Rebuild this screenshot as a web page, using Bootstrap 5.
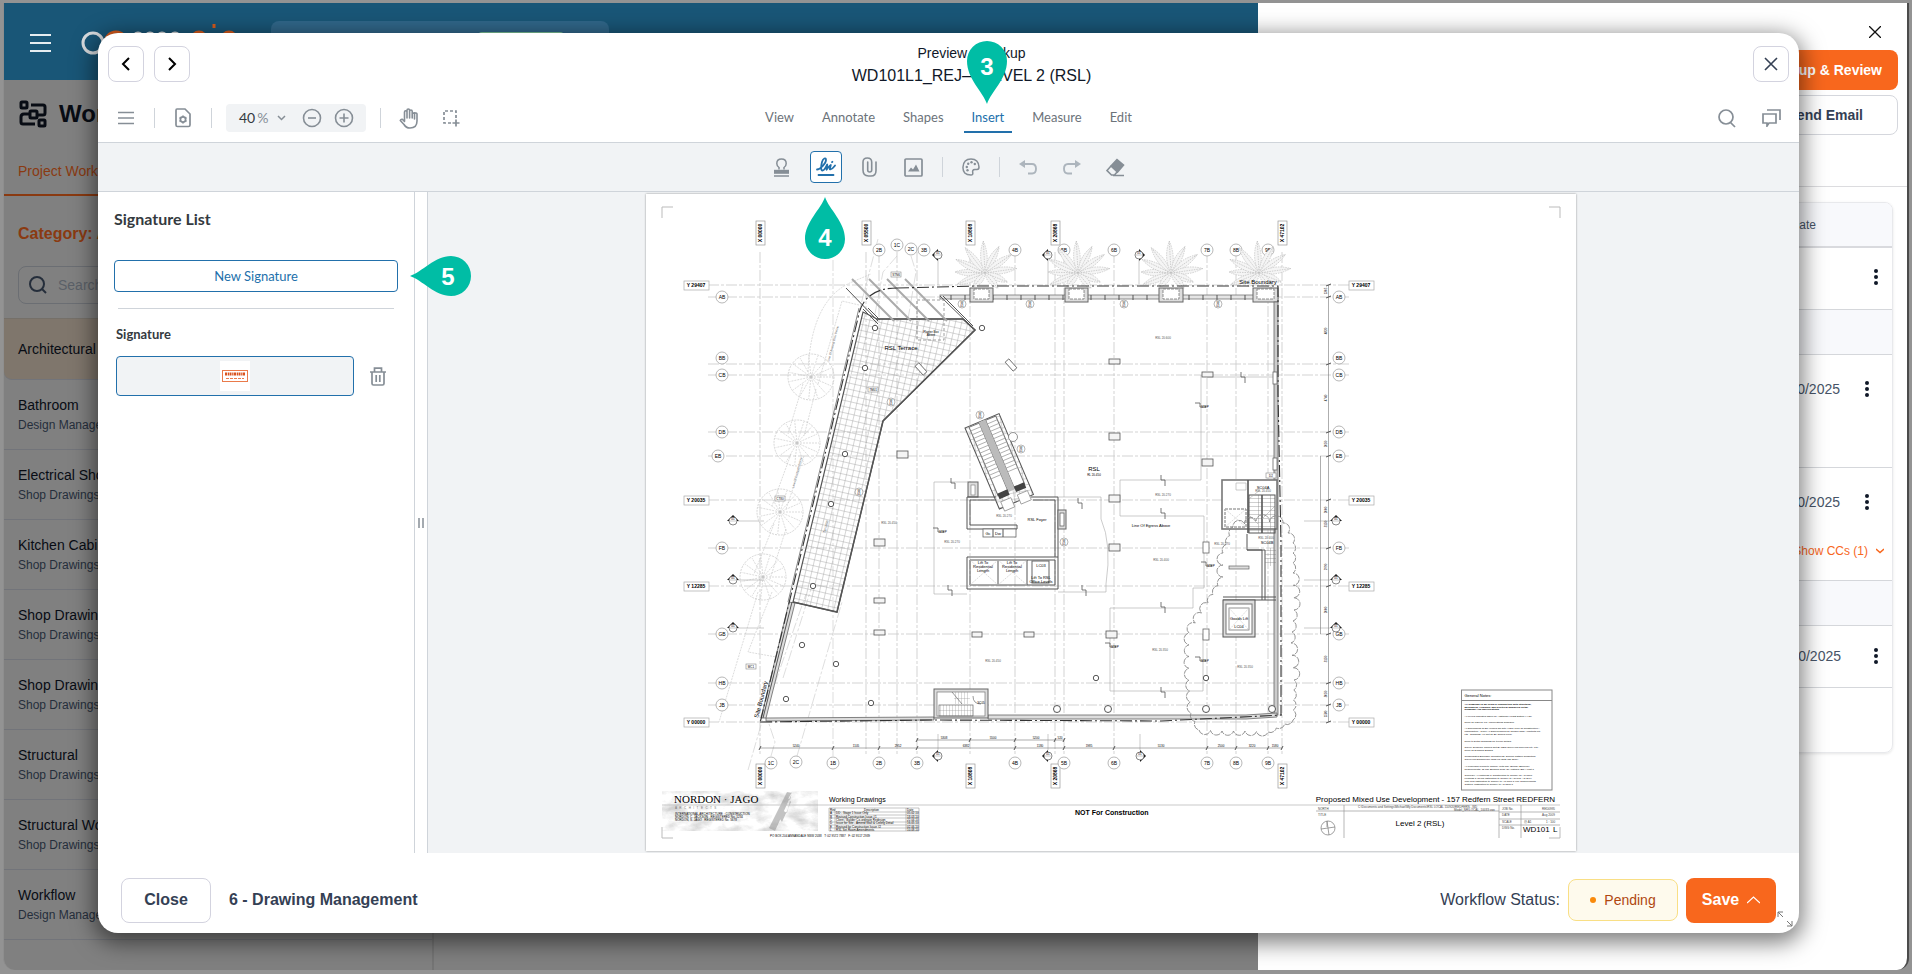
<!DOCTYPE html>
<html lang="en">
<head>
<meta charset="utf-8">
<meta name="viewport" content="width=device-width, initial-scale=1">
<title>Preview / Markup</title>
<link href="https://cdn.jsdelivr.net/npm/bootstrap@5.3.0/dist/css/bootstrap.min.css" rel="stylesheet">
<style>
  :root { --orange:#f8671d; --blue:#2270ab; --icon:#868e96; --rule:#cfd4da; --slate:#344054; }
  body { font-family:"Liberation Sans", Arial, sans-serif; font-size:14px; line-height:20px; background:#939393; color:#101828; }
  svg { display:block; flex:none; }
  .frame { height:100vh; min-height:640px; padding:3px 3px 4px; }
  .app { border-radius:0 0 12px 12px; background:#808080; border-left:1px solid #8e8e8e; }
  .app-head { height:77px; background:#195677; padding-left:26px; }
  .app-burger { margin-top:30px; }
  .app-logo { margin:16px 0 0 30px; }
  .app-find { width:338px; height:40px; border-radius:8px; background:#30678a; margin:18px 0 0 28px; padding-left:207px; }
  .app-find i { display:block; width:86px; height:22px; margin-top:11px; border-radius:4px; background:#7fc49a; }
  .categories { width:430px; border-right:2px solid #757575; }
  .cat-title { font-size:24px; line-height:32px; font-weight:700; color:#080c14; padding:18px 15px 0; }
  .cat-tab { color:#8a3a11; border-bottom:2px solid #8a3a11; padding:31px 14px 12px; height:66px; line-height:20px; }
  .cat-name { color:#8a3a11; font-weight:700; font-size:16px; padding:28px 14px 22px; }
  .cat-search { margin:0 14px 14px; height:38px; border:1px solid #6b6e73; border-radius:8px; padding:0 9px; }
  .cat-search input { background:transparent; border:0; outline:0; width:200px; color:#5b6068; }
  .cat-search input::placeholder { color:#5b6068; }
  .cat-row { height:70px; padding:0 14px; border-bottom:1px solid #72747a; color:#080c14; text-decoration:none; }
  .cat-row small { font-size:12px; color:#252e3b; line-height:20px; }
  .cat-row.current { height:62px; background:#7f766c; border-radius:0 0 0 8px; border-top:1px solid #757069; }

  .drawer { position:absolute; top:3px; right:3px; bottom:4px; width:651px; background:#fff; border-right:2px solid #4b4b4b; border-radius:0 0 12px 0; }
  .drawer-top { height:184px; border-bottom:1px solid #dcdcdf; padding:23px 9px 0; gap:5px; }
  .drawer-x { margin:0 17px 7px; }
  .icon-btn { border:0; background:none; padding:0; display:flex; align-items:center; justify-content:center; }
  .act { width:180px; height:40px; border-radius:8px; font-size:14px; font-weight:700; }
  .act-main { background:var(--orange); color:#fff; border:0; text-align:right; padding-right:16px; }
  .act-mail { background:#fff; color:var(--slate); border:1px solid #d5d7dd; text-align:right; padding-right:34px; }
  .grid-box { margin:15px 14px 0 20px; border:1px solid #e8e9ec; border-radius:8px; box-shadow:0 1px 3px #0000001a; overflow:hidden; }
  .grid-box table { width:100%; border-collapse:collapse; color:#475467; }
  .grid-box th { height:44px; background:#f8f9fc; font-size:12px; font-weight:400; border-bottom:2px solid #d9dade; text-align:right; padding-right:76px; }
  .grid-box td { padding:0 8px; border-bottom:1px solid #d5d7db; vertical-align:top; }
  .date-line { padding-top:24px; padding-right:14px; gap:24px; }
  .date-line.outer { padding-top:20px; padding-right:5px; gap:32px; }
  .ccs { color:var(--orange); font-size:12px; padding-top:29px; }
  .band td { background:#f8f9fc; height:45px; }
  .end-row td { border-bottom:0; height:65px; }

  .markup { position:absolute; inset:33px 113px 41px 98px; background:#fff; border-radius:20px; box-shadow:0 6px 22px 4px #00000080; display:flex; flex-direction:column; }
  .markup-head { height:57px; padding:0 10px; gap:10px; }
  .sq { width:36px; height:36px; border:1px solid #d3d3df; border-radius:8px; background:#fff; margin-top:13px; }
  .markup-title { padding-top:10px; font-size:14px; }
  .markup-title h1 { font-size:16px; line-height:26px; margin:0; font-weight:400; }
  .lato { font-family:Lato, "Liberation Sans", sans-serif; }
  .bar-a { height:53px; padding:4px 12px 0; border-bottom:1px solid var(--rule); }
  .bar-a-side { flex:1 1 0; gap:12px; }
  .bar-b { height:49px; background:#f1f3f5; border-bottom:1px solid var(--rule); gap:12px; }
  .tool { width:32px; height:32px; border:1px solid transparent; border-radius:4px; background:none; padding:0; color:var(--icon); display:flex; align-items:center; justify-content:center; position:relative; }
  .tool.on { border-color:var(--blue); background:#fff; color:var(--blue); }
  .tool.dim { color:#adb5bd; }
  .sep { width:1px; height:20px; background:var(--rule); }
  .zoomer { height:28px; width:140px; background:#f1f3f5; border-radius:4px; padding-left:13px; color:#343a40; font-size:14px; margin:0 2px; }
  .zoomer .tool { height:28px; }
  .zoom-pct { width:37px; gap:2px; }
  .zoom-pct span { color:#868e96; }
  .tabs { gap:12px; }
  .tabs a { position:relative; color:#6c737a; text-decoration:none; font-size:13px; line-height:28px; padding:0 8px; border-bottom:2px solid transparent; }
  .tabs a.on { color:var(--blue); border-color:var(--blue); }
  .callout { position:absolute; z-index:3; pointer-events:none; }
  .callout text { font:700 24px "Liberation Sans", Arial, sans-serif; fill:#fff; text-anchor:middle; }
  .over-tab { left:3px; bottom:27px; }
  .under-tool { left:-6px; top:45px; }
  .beside-btn { left:calc(100% + 12px); top:-4px; }
  .work { min-height:0; }
  .signatures { width:316px; padding:15px 16px 0; color:#343a40; }
  .signatures h2 { font-size:16px; line-height:24px; margin:0 0 29px; font-weight:700; }
  .signatures h3 { font-size:13px; line-height:20px; margin:0 0 12px; font-weight:700; }
  .new-sig { width:100%; height:32px; border:1px solid var(--blue); border-radius:4px; background:#fff; color:var(--blue); font-size:13px; }
  .signatures hr { margin:16px 4px 15px; border-color:var(--rule); opacity:1; }
  .sig-item { padding-left:2px; }
  .sig-pick { width:238px; height:40px; border:1px solid var(--blue); border-radius:4px; background:#f1f3f5; padding:0; display:flex; align-items:center; justify-content:center; }
  .grip { width:14px; border:solid var(--rule); border-width:0 1px; }
  .viewer { background:#f1f3f5; min-width:0; padding:2px 6px 0 0; overflow:hidden; }
  .sheet { width:930px; max-width:100%; background:#fff; box-shadow:0 0 2px #00000066; }
  .markup-foot { height:80px; padding:14px 23px 0; font-size:16px; color:var(--slate); position:relative; }
  .foot-btn { height:45px; border-radius:8px; font-weight:700; font-size:16px; }
  .close-btn { width:90px; border:1px solid #d3d3df; background:#fff; color:var(--slate); margin-right:18px; }
  .save-btn { width:90px; border:0; background:var(--orange); color:#fff; }
  .pending { width:110px; height:42px; border:1px solid #f9df85; border-radius:8px; background:#fefaed; color:#b0470f; font-size:14px; }
  .pending i { width:6px; height:6px; border-radius:50%; background:#f98a0b; }
  .resize { position:absolute; right:6px; bottom:6px; }

  /* drawing sheet */
  .sheet text { font-family:"Liberation Sans", Arial, sans-serif; }
  .s3 { font-size:3px; } .s4 { font-size:4px; } .s5 { font-size:5px; } .s6 { font-size:6px; } .s7 { font-size:7px; } .s8 { font-size:8px; }
  .mid { text-anchor:middle; }
  .axis { stroke:#c8c8c8; stroke-dasharray:11 2 3 2; fill:none; }
  .thin { stroke:#aaa; fill:none; stroke-width:.6; }
  .wall { stroke:#666; fill:#ddd; stroke-width:.8; }
  .edge { stroke:#555; fill:none; }
  .site { stroke:#333; fill:none; stroke-width:1.1; stroke-dasharray:12 3 2 3; }
  .faint { stroke:#c4c4c4; fill:none; stroke-width:.6; stroke-dasharray:2 1; }
</style>
</head>
<body>
<div class="frame">
  <div class="app h-100 d-flex flex-column overflow-hidden">
    <header class="app-head d-flex flex-shrink-0">
      <button class="icon-btn app-burger align-self-start" aria-label="Main menu"><svg width="21" height="20" stroke="#e6edf1" stroke-width="2"><path d="M0 2h21M0 10h21M0 18h21"/></svg></button>
      <svg class="app-logo" width="162" height="50" fill="none" stroke-width="3">
        <circle cx="12" cy="24" r="10" stroke="#d9dcdf"/>
        <circle cx="35" cy="24" r="11" stroke="#d85b1c"/>
        <g stroke="#d9dcdf"><circle cx="57" cy="19" r="5"/><circle cx="69" cy="19" r="5"/><circle cx="81" cy="19" r="5"/><circle cx="94" cy="19" r="5"/></g>
        <g stroke="#d85b1c"><circle cx="118" cy="20" r="7"/><path d="M133 5v4M133 14v12"/><circle cx="148" cy="20" r="7"/></g>
      </svg>
      <div class="app-find"><i></i></div>
    </header>
    <div class="categories flex-grow-1">
      <div class="cat-title d-flex align-items-center gap-2">
        <svg width="28" height="28" fill="none" stroke="#080c14" stroke-width="3"><rect x="2" y="2" width="6" height="6" rx="1"/><rect x="11" y="11" width="7" height="7" rx="1"/><rect x="20" y="20" width="6" height="6" rx="1"/><path d="M12 5h12q2 0 2 2v6q0 2-2 2h-5M11 14H5q-3 0-3 3v5q0 2 2 2h12"/></svg>
        <span class="ms-1">Workflows</span>
      </div>
      <div class="cat-tab">Project Workflows</div>
      <div class="cat-name">Category: All</div>
      <label class="cat-search d-flex align-items-center gap-2">
        <svg width="20" height="20" fill="none" stroke="#252e3b" stroke-width="2"><circle cx="9" cy="9" r="7"/><path d="M14 14l4 4"/></svg>
        <input type="search" placeholder="Search" aria-label="Search categories">
      </label>
      <nav class="d-flex flex-column">
        <a href="#" class="cat-row current d-flex flex-column justify-content-center">Architectural</a>
        <a href="#" class="cat-row d-flex flex-column justify-content-center">Bathroom<small>Design Management</small></a>
        <a href="#" class="cat-row d-flex flex-column justify-content-center">Electrical Shop Drawings<small>Shop Drawings</small></a>
        <a href="#" class="cat-row d-flex flex-column justify-content-center">Kitchen Cabinets<small>Shop Drawings</small></a>
        <a href="#" class="cat-row d-flex flex-column justify-content-center">Shop Drawings<small>Shop Drawings</small></a>
        <a href="#" class="cat-row d-flex flex-column justify-content-center">Shop Drawings<small>Shop Drawings</small></a>
        <a href="#" class="cat-row d-flex flex-column justify-content-center">Structural<small>Shop Drawings</small></a>
        <a href="#" class="cat-row d-flex flex-column justify-content-center">Structural Workflow<small>Shop Drawings</small></a>
        <a href="#" class="cat-row d-flex flex-column justify-content-center">Workflow<small>Design Management</small></a>
      </nav>
    </div>
  </div>
</div>

<aside class="drawer">
  <div class="drawer-top d-flex flex-column align-items-end">
    <button class="icon-btn drawer-x" aria-label="Close panel"><svg width="12" height="12" stroke="#111" stroke-width="1.3"><path d="M0 0l12 12M12 0L0 12"/></svg></button>
    <button class="act act-main">Markup &amp; Review</button>
    <button class="act act-mail">Send Email</button>
  </div>
  <div class="grid-box">
    <table>
      <thead><tr><th>Due Date</th></tr></thead>
      <tbody id="reviews"></tbody>
    </table>
  </div>
</aside>

<main class="markup">
  <div class="markup-head d-flex align-items-start">
    <button class="sq icon-btn" aria-label="Previous"><svg width="10" height="14" fill="none" stroke="#000" stroke-width="2"><path d="M8 1L2 7l6 6"/></svg></button>
    <button class="sq icon-btn" aria-label="Next"><svg width="10" height="14" fill="none" stroke="#000" stroke-width="2"><path d="M2 1l6 6-6 6"/></svg></button>
    <div class="markup-title flex-grow-1 text-center"><div>Preview / Markup</div><h1>WD101L1_REJ— LEVEL 2 (RSL)</h1></div>
    <button class="sq icon-btn" aria-label="Close preview"><svg width="14" height="14" stroke="#344054" stroke-width="1.6"><path d="M1 1l12 12M13 1L1 13"/></svg></button>
  </div>

  <div class="bar-a lato d-flex align-items-center">
    <div class="bar-a-side d-flex align-items-center">
      <button class="tool" aria-label="Menu"><svg width="16" height="14" stroke="currentColor" stroke-width="1.6"><path d="M0 1.5h16M0 7h16M0 12.5h16"/></svg></button>
      <span class="sep"></span>
      <button class="tool" aria-label="Page settings"><svg width="16" height="20" fill="none" stroke="currentColor" stroke-width="1.7"><path d="M2 1h8l5 5v11q0 1.5-1.5 1.5h-11Q1 18.500 1 17V2.500Q1 1 2 1z"/><circle cx="8" cy="11.5" r="2.6"/><path d="M8 7.500v1.300M8 14.200v1.300M4.500 9.500l1.200.7M10.300 12.800l1.200.7M4.500 13.500l1.200-.7M10.300 10.200l1.200-.7"/></svg></button>
      <span class="sep"></span>
      <div class="zoomer d-flex align-items-center">
        <div class="zoom-pct d-flex">40<span>%</span></div>
        <svg width="10" height="6" fill="none" stroke="#868e96" stroke-width="1.5"><path d="M2 1l3.500 3.500L9 1"/></svg>
        <button class="tool ms-2 me-0 ps-1" aria-label="Zoom out"><svg width="20" height="20" fill="none" stroke="currentColor" stroke-width="1.6"><circle cx="10" cy="10" r="8.5"/><path d="M6 10h8"/></svg></button>
        <button class="tool ps-1" aria-label="Zoom in"><svg width="20" height="20" fill="none" stroke="currentColor" stroke-width="1.6"><circle cx="10" cy="10" r="8.5"/><path d="M5.500 10h9M10 5.500v9"/></svg></button>
      </div>
      <span class="sep"></span>
      <div class="d-flex" style="gap:10px">
      <button class="tool" aria-label="Pan"><svg width="20" height="21" fill="none" stroke="currentColor" stroke-width="1.6" stroke-linecap="round" stroke-linejoin="round"><path d="M5.500 13V4q0-1.300 1.200-1.300T8 4v6V2.300Q8 1 9.300 1t1.300 1.300V10 3.300Q10.600 2 11.900 2t1.300 1.300V10 6q0-1.200 2.400-1.200T18 6v7q0 7-7 7-4 0-6-3.500L1.300 12.500q.5-1.500 2-1.200L5.500 13.500M15.500 5v6"/></svg></button>
      <button class="tool" aria-label="Select area"><svg width="18" height="18" fill="none" stroke="currentColor" stroke-width="1.7"><path d="M9 14H2V2h12v7" stroke-dasharray="3 2"/><path d="M14 10.500v7M10.500 14H17.500"/></svg></button>
      </div>
    </div>
    <nav class="tabs d-flex">
      <a href="#">View</a><a href="#">Annotate</a><a href="#">Shapes</a>
      <a href="#" class="on">Insert
        <svg class="callout over-tab" width="40" height="63" viewBox="0 0 40 63"><path d="M20 63C16 51 0 38 0 20a20 20 0 0 1 40 0c0 18-16 31-20 43z" fill="#00bda5"/><text x="20" y="34">3</text></svg></a>
      <a href="#">Measure</a><a href="#">Edit</a>
    </nav>
    <div class="bar-a-side d-flex justify-content-end">
      <button class="tool" aria-label="Search"><svg width="18" height="19" fill="none" stroke="currentColor" stroke-width="1.7"><circle cx="8" cy="8" r="7"/><path d="M12.500 13.500l4.500 4.500"/></svg></button>
      <button class="tool" aria-label="Comments"><svg width="19" height="18" fill="none" stroke="currentColor" stroke-width="1.7"><path d="M1 5h13v9H7l-2 3v-3H1zM5 1h13v10"/></svg></button>
    </div>
  </div>

  <div class="bar-b d-flex align-items-center justify-content-center">
    <button class="tool" aria-label="Stamp"><svg width="17" height="19" fill="none" stroke="currentColor" stroke-width="1.5"><path d="M6 11.500V9.500Q3.800 8 3.800 5.500 3.800 1 8.500 1t4.700 4.500q0 2.500-2.200 4v2"/><path d="M1 13.800h15" stroke-width="4"/><path d="M1 18h15"/></svg></button>
    <button class="tool on" aria-label="Signature"><svg width="20" height="20" fill="none" stroke="currentColor" stroke-width="1.8" stroke-linecap="round" stroke-linejoin="round"><path d="M1 12.500C4 12.500 10 6.500 10 3c0-3-3-1.500-4 2-1 4-1.500 8.500.5 8.500S10 9.500 11.200 7.500L10.600 12.800C12 11 13 9 14.800 8L13.800 12.200C15.500 13.500 17 11 19 8.500M16 5.200l.4-.4M2.500 18h15"/></svg>
      <svg class="callout under-tool" width="40" height="62" viewBox="0 0 40 62"><path d="M20 0C24 12 40 25 40 42a20 20 0 0 1-40 0C0 25 16 12 20 0z" fill="#00bda5"/><text x="20" y="49">4</text></svg></button>
    <button class="tool" aria-label="Attach file"><svg width="15" height="20" fill="none" stroke="currentColor" stroke-width="1.6" stroke-linecap="round"><path d="M14 5v8.500q0 5.500-5 5.500H6.500Q1 19 1 13V5q0-4 4.300-4T9.700 5v8q0 2-2 2t-2-2V5M11.500 5"/></svg></button>
    <button class="tool" aria-label="Insert image"><svg width="19" height="19" fill="none" stroke="currentColor" stroke-width="1.7"><rect x="1" y="1" width="17" height="17" rx="1"/><path d="M4 13.500l3-4 2 2 3-5 3.500 7z" fill="currentColor" stroke="none"/></svg></button>
    <span class="sep"></span>
    <button class="tool" aria-label="Style"><svg width="18" height="18" fill="none" stroke="currentColor" stroke-width="1.5"><path d="M9 17q2 0 1.800-2-.8-3.500 2-3.500H15q2 0 2-2.500Q16.500 1 9 1T1 9t8 8z"/><g fill="currentColor" stroke="none"><circle cx="4.8" cy="9" r="1.2"/><circle cx="6.2" cy="5.7" r="1.2"/><circle cx="9.5" cy="4.3" r="1.2"/><circle cx="12.8" cy="6" r="1.2"/><circle cx="5.5" cy="12.3" r="1.2"/></g></svg></button>
    <span class="sep"></span>
    <button class="tool dim" aria-label="Undo"><svg width="18" height="15" fill="none" stroke="currentColor" stroke-width="1.9"><path d="M4 4h9q4 0 4 4.800T13 13.500H9"/><path d="M0 4l6-4v8z" fill="currentColor" stroke="none"/></svg></button>
    <button class="tool dim" aria-label="Redo"><svg width="18" height="15" fill="none" stroke="currentColor" stroke-width="1.9"><path d="M14 4H5Q1 4 1 8.800t4 4.700h4"/><path d="M18 4l-6-4v8z" fill="currentColor" stroke="none"/></svg></button>
    <button class="tool" aria-label="Eraser"><svg width="19" height="19" fill="none" stroke="currentColor" stroke-width="1.6"><path d="M11 1.500l6.500 5.500-6 7-6.500-6z" fill="currentColor"/><path d="M5 8l-4 4.500 4.500 4.500h3l3-3.500M7 17.500h11"/></svg></button>
  </div>

  <div class="work d-flex flex-grow-1">
    <section class="signatures lato flex-shrink-0">
      <h2>Signature List</h2>
      <div class="position-relative">
        <button class="new-sig">New Signature</button>
        <svg class="callout beside-btn" width="61" height="40" viewBox="0 0 61 40"><path d="M0 20C12 16 25 0 41 0a20 20 0 0 1 0 40C25 40 12 24 0 20z" fill="#00bda5"/><text x="38" y="29">5</text></svg>
      </div>
      <hr>
      <div class="sig-item">
        <h3>Signature</h3>
        <div class="d-flex align-items-center gap-2">
          <button class="sig-pick" aria-label="Saved signature"><svg width="30" height="30"><path fill="#fff" d="M0 0h30v30H0z"/><rect x="2.5" y="9.5" width="25" height="11" fill="none" stroke="#ea7a4a"/><path d="M5 13h20" stroke="#d9531e" stroke-width="3" stroke-dasharray="2 .7 1.3 .5"/><path d="M6 17.500h18" stroke="#ea7a4a" stroke-dasharray="3 1"/></svg></button>
          <button class="tool" aria-label="Delete signature"><svg width="16" height="19" fill="none" stroke="currentColor" stroke-width="1.7"><path d="M0 5h16M4.500 5V1.200h7V5M2 5v11.500q0 1.500 1.500 1.500h9q1.500 0 1.500-1.500V5M6.200 8v7M9.800 8v7"/></svg></button>
        </div>
      </div>
    </section>
    <div class="grip d-flex align-items-center justify-content-center flex-shrink-0"><svg width="6" height="10" stroke="#868e96" stroke-width="1.5"><path d="M1 0v10M5 0v10"/></svg></div>
    <section class="viewer flex-grow-1 d-flex justify-content-center align-items-start">
      <svg class="sheet" id="sheet" viewBox="0 0 930 657" role="img" aria-label="Level 2 floor plan">
        <defs>
          <pattern id="tile" width="6" height="6" patternUnits="userSpaceOnUse" patternTransform="rotate(13)"><path d="M0 0h6M0 0v6" stroke="#999" stroke-width=".8"/></pattern>
          <pattern id="step" width="3" height="12" patternUnits="userSpaceOnUse"><path d="M0 0v12M0 0h3" stroke="#888" stroke-width=".6"/></pattern>
          <pattern id="stepv" width="12" height="4" patternUnits="userSpaceOnUse"><path d="M0 0h12M0 0v4" stroke="#777" stroke-width=".7"/></pattern>
          <filter id="brush" x="0" y="0" width="1" height="1"><feTurbulence type="fractalNoise" baseFrequency=".05 .09" numOctaves="5" seed="8"/><feColorMatrix values="0 0 0 0 .4  0 0 0 0 .4  0 0 0 0 .4  2.2 0 0 0 -.9"/></filter>
        </defs>
        <g id="plan"></g>
        <path d="M16 24V13h11M903 13h11v11M16 633v11h11" fill="none" stroke="#bbb"/>
        <!-- title block -->
        <rect x="16" y="597" width="156" height="40" filter="url(#brush)" opacity=".55"/>
        <path d="M123 634l18-36 5 1-17 38zM146 598l-10 18 5 3zM132 622l10-18 3 4-9 20z" fill="#888" opacity=".5"/>
        <path d="M16 611H914" stroke="#bbb" stroke-width=".8"/>
        <text x="28" y="609" style="font:11px 'Liberation Serif',serif">NORDON · JAGO</text>
        <text x="29" y="615" class="s3" fill="#777">A &#160; R &#160; C &#160; H &#160; I &#160; T &#160; E &#160; C &#160; T &#160; S</text>
        <text x="29" y="621" class="s3">INTERNATIONAL ARCHITECTURE · CONSTRUCTION</text>
        <text x="29" y="624" class="s3">NORDON, C. JACKSON &#160; REGISTERED No. 1234</text>
        <text x="29" y="627" class="s3">NORDON, S. JAGO &#160; REGISTERED No. 5678</text>
        <text x="124" y="643" class="s3">PO BOX 204 ANNANDALE NSW 2038 &#160; T: 02 9572 7887 &#160; F: 02 9517 2939</text>
        <text x="183" y="608" class="s7">Working Drawings</text>
        <path d="M183 614h90v23h-90zM189 614v23M260 614v23M183 618h90M183 621h90M183 624h90M183 628h90M183 631h90M183 634h90" fill="none" stroke="#888" stroke-width=".5"/>
        <g class="s3" id="revs"></g>
        <text x="429" y="621" class="s7" font-weight="700">NOT For Construction</text>
        <text x="909" y="608" class="s8" text-anchor="end">Proposed Mixed Use Development - 157 Redfern Street REDFERN</text>
        <text x="774" y="632" class="s8 mid">Level 2 (RSL)</text>
        <text x="877" y="638" class="s8">WD101</text><text x="907" y="638" class="s8">L</text>
        <path d="M698 611v33M853 611v33M875 611v33M853 618h61M853 625h61M853 631h61M670 617h183" fill="none" stroke="#999" stroke-width=".7"/>
        <path d="M903 644h11v-11" fill="none" stroke="#bbb"/>
        <g class="s3" fill="#444"><text x="672" y="616">NORTH</text><text x="672" y="622">TITLE</text><text x="712" y="614">C:\Documents and Settings\Michael\My Documents\RSL LOCAL 110920\REDFERN - WD</text><text x="808" y="617">Model_NR\LOCAL_10033.vwx</text><text x="856" y="616">JOB No.</text><text x="896" y="616">RED0995</text><text x="856" y="622">DATE</text><text x="896" y="622">Aug 2009</text><text x="856" y="629">SCALE</text><text x="878" y="629">@ A1</text><text x="900" y="629">1 : 100</text><text x="856" y="635">DWG No.</text></g>
        <g fill="none" stroke="#888" stroke-width=".8"><circle cx="682" cy="634" r="7"/><path d="M675 635l14-2M681 627l2 14M681 627v6"/></g>
        <svg x="815" y="495" width="92" height="102" viewBox="0 0 184 204"><g id="notes"><rect x="1" y="2" width="181" height="200" fill="#fff" stroke="#888" stroke-width="2"/><path d="M1 23h181" stroke="#888" stroke-width="2"/><text x="7" y="16" style="font-size:8px">General Notes:</text></g></svg>
      </svg>
    </section>
  </div>

  <footer class="markup-foot d-flex align-items-center">
    <button class="foot-btn close-btn">Close</button>
    <strong>6 - Drawing Management</strong>
    <span class="ms-auto me-2">Workflow Status:</span>
    <span class="pending d-flex align-items-center justify-content-center gap-2 me-2"><i></i>Pending</span>
    <button class="foot-btn save-btn d-flex align-items-center justify-content-center gap-2">Save <svg width="13" height="8" fill="none" stroke="#fff" stroke-width="1.2"><path d="M0 7l6.500-6L13 7"/></svg></button>
    <svg class="resize" width="16" height="16" fill="none" stroke="#777" stroke-width="1"><path d="M1 6V1h5M1 1l5 5M15 10v5h-5M15 15l-5-5"/></svg>
  </footer>
</main>

<script src="https://cdn.jsdelivr.net/npm/bootstrap@5.3.0/dist/js/bootstrap.bundle.min.js"></script>
<script>
// review rows in the side drawer
const dots = '<button class="icon-btn" aria-label="Row actions"><svg width="6" height="18" fill="#101828"><circle cx="3" cy="3" r="2"/><circle cx="3" cy="9" r="2"/><circle cx="3" cy="15" r="2"/></svg></button>';
const line = (date, kind = '') => `<div class="date-line ${kind} d-flex justify-content-end align-items-center">${date}${dots}</div>`;
const cell = (h, inner) => `<tr><td style="height:${h}px">${inner}</td></tr>`;
const band = '<tr class="band"><td></td></tr>';
document.getElementById('reviews').innerHTML =
  cell(62, line('', 'outer')) + band +
  cell(113, line('10/10/2025')) +
  cell(113, line('10/10/2025') + '<a href="#" class="ccs d-flex justify-content-end align-items-center gap-2 text-decoration-none">Show CCs (1)<svg width="8" height="6" fill="none" stroke="#f8671d" stroke-width="1.5"><path d="M0 1l4 3.500L8 1"/></svg></a>') +
  band + cell(62, line('10/10/2025', 'outer')) + '<tr class="end-row"><td></td></tr>';

// floor plan
let s = '';
const P = (d, c, x = '') => s += `<path d="${d}" class="${c}" ${x}/>`;
const T = (x, y, t, c = 's5 mid', e = '') => s += `<text x="${x}" y="${y}" class="${c}" ${e}>${t}</text>`;
const C = (x, y, r, e = 'fill="#fff" stroke="#777" stroke-width=".8"') => s += `<circle cx="${x}" cy="${y}" r="${r}" ${e}/>`;
const R = (x, y, w, h, e = 'fill="#fff" stroke="#666" stroke-width=".8"') => s += `<rect x="${x}" y="${y}" width="${w}" height="${h}" ${e}/>`;
const bubble = (x, y, t) => { C(x, y, 6, 'fill="#fff" stroke="#999" stroke-width=".7"'); T(x, y + 2, t); };

// street trees
for (const [x, y] of [[165,183],[151,249],[134,318],[117,383]]) {
  C(x, y, 23, 'fill="none" stroke="#c4c4c4" stroke-width=".7" stroke-dasharray="2 1"');
  for (let a = 0; a < 360; a += 24) P(`M${x} ${y}L${(x + 22 * Math.cos(a * .01745)).toFixed(1)} ${(y + 22 * Math.sin(a * .01745)).toFixed(1)}`, 'faint');
}
P('M162 178Q165 105 206 88L225 80M172 190L196 107 213 111M157 190L142 240M170 195L158 242M145 260L126 312M158 262L140 315M128 330L108 380M140 335L124 385M112 398L73 528M126 398L102 458 136 464', 'faint');
// axes
for (const x of [114,220,233,251,271,324,369,409,418,468,561,590,622,636]) P(`M${x} 58V562`, 'axis', 'stroke-width=".8"');
P('M187 66V562M232 45L213 118M251 62L237 78 228 125M265 62L270 78 262 125M125 562L129 548 123 530M151 562L196 408M102 576L117 524 160 400M137 484L165 395', 'axis', 'stroke-width=".6"');
for (const y of [91,103,170,181,238,262,306,354,392,440,489,511,528]) P(`M62 ${y}H703`, 'axis', 'stroke-width=".8"');
[114,220,324,409,636].forEach((x, i) => { const t = ['X 00000','X 05500','X 10808','X 20868','X 47102'][i];
  for (const y of x === 220 ? [27] : [27, 570]) { R(x - 4, y, 9, 24, 'fill="#fff" stroke="#999" stroke-width=".7"'); T(0, 0, t, 's5 mid', `font-weight="700" transform="translate(${x + 2} ${y + 12}) rotate(-90)"`); } });
[[91,'Y 29407'],[306,'Y 20035'],[392,'Y 12285'],[528,'Y 00000']].forEach(([y, t]) => { for (const x of [38, 703]) { R(x, y - 4, 25, 9, 'fill="#fff" stroke="#aaa" stroke-width=".7"'); T(x + 12, y + 2, t, 's5 mid', 'font-weight="700"'); } });
[[233,56,'2B'],[251,51,'1C'],[265,55,'2C'],[278,56,'3B'],[369,56,'4B'],[418,56,'5B'],[468,56,'6B'],[561,56,'7B'],[590,56,'8B'],[622,56,'9B'],[125,569,'1C'],[150,568,'2C'],[187,569,'1B'],[233,569,'2B'],[271,569,'3B'],[369,569,'4B'],[418,569,'5B'],[468,569,'6B'],[561,569,'7B'],[590,569,'8B'],[622,569,'9B']].forEach(b => bubble(...b));
[[103,'AB'],[164,'BB'],[181,'CB'],[238,'DB'],[262,'EB'],[354,'FB'],[440,'GB'],[489,'HB'],[511,'JB']].forEach(([y, t]) => { bubble(t === 'EB' ? 72 : 76, y, t); bubble(693, y, t); });
const mark = (x, y, r) => { s += `<g transform="translate(${x} ${y}) rotate(${r})"><path d="M-6 0L0-6 6 0z" fill="#111"/></g>`; C(x, y, 4, 'fill="#fff" stroke="#555" stroke-width=".7"'); P(`M${x - 4} ${y}h8`, 'thin'); T(x, y - 1, '01', 's3 mid'); };
[[292,61,-90],[402,61,-90],[493,61,90],[292,562,-90],[402,562,-90],[494,562,90]].forEach(m => { mark(...m); P(m[1] < 99 ? `M${m[0]} 66V91` : `M${m[0]} 540V556`, 'thin'); });
for (const y of [327,386,434]) { mark(87, y, 0); mark(690, y, 0); P(`M92 ${y}H118M658 ${y}H684`, 'thin'); }
// dimension strings
P('M682.500 91V528M674.500 262V440M114 554H636M271 546H418', 'thin', 'style="stroke:#777"');
for (const y of [91,103,170,238,262,306,354,392,440,489,511,528]) P(`M680 ${y + 1}l5-2`, 'edge');
for (const x of [114,187,233,271,369,418,468,561,590,622,636]) P(`M${x - 1} 556l2-4`, 'edge');
for (const x of [271,324,369,409,418]) P(`M${x - 1} 548l2-4`, 'edge');
[[150,'5240'],[210,'1105'],[252,'2952'],[320,'6382'],[394,'1180'],[443,'1985'],[515,'5130'],[575,'2500'],[606,'3220'],[629,'1580']].forEach(([x, t]) => T(x, 553, t, 's3 mid'));
[[298,'5308'],[347,'5500'],[390,'5200'],[414,'520']].forEach(([x, t]) => T(x, 545, t, 's3 mid'));
[97,137,204,250,316,330,373,416,465,500,520].forEach((y, i) => T(0, 0, ['1305','4820','4740','2050','2000','3150','2990','2000','3150','3050','1580'][i], 's3 mid', `transform="translate(681 ${y}) rotate(-90)"`));
// palms along the frontage
for (const [x, y] of [[339,79],[432,79],[525,79],[613,79]])
  for (const [a, l] of [[-178,30],[-155,32],[-128,32],[-93,32],[-62,30],[-35,32],[-8,32],[22,24],[50,20],[158,30],[130,18]])
    s += `<path transform="translate(${x} ${y}) rotate(${a})" d="M0 0Q${l / 2}-7 ${l} 0Q${l / 2} 6 0 0M3 0H${l}" fill="#f5f5f5" stroke="#c0c0c0" stroke-width=".7" stroke-dasharray="1.5 1"/>`;
// facade band, planters and walls
R(294, 101, 338, 4, 'fill="#e4e4e4" stroke="#777" stroke-width=".8"');
for (let x = 305; x < 632; x += 14) P(`M${x} 101v5`, 'edge');
for (const [x, w] of [[324,23],[419,23],[513,24],[607,25]]) { R(x, 94, w, 14, 'fill="#ddd" stroke="#666"'); R(x + 4, 95, w - 8, 10, 'fill="#fff" stroke="#777" stroke-width=".8" stroke-dasharray="3 1"'); }
R(628, 108, 4, 413, 'fill="#ccc" stroke="#666" stroke-width=".8"');
P('M342 521L600 521 631 519V523L600 525H342zM120 524L288 523V526L120 527z', 'wall');
P('M143 408L115 524H120L149 409z', 'wall'); P('M146 408L117 524', 'edge');
// terrace
P('M231 125H317L329 136 237 227 191 418 147 408 217 118z', '', 'fill="url(#tile)" stroke="#555" stroke-width="1.2"');
P('M213 114L142 408', 'edge', 'stroke-width=".7"');
P('M317 125L329 136 237 227 191 418 147 408M231 125H317', 'edge', 'stroke-width="1.5"');
P('M294 102L329 136M297 102L327 132M217 115L232 130M222 114L234 126M200 94L232 127', 'edge');
for (const x of [206,223,241,259]) P(`M${x} 85l42 42`, '', 'stroke="#aaa" stroke-width="2"');
R(271, 106, 27, 40, 'fill="none" stroke="#888" stroke-dasharray="3 2" stroke-width=".8"');
P('M114.500 527L212 124Q217 94 251 94M114 528L289 526 515 527 636 521', 'site'); P('M251 94L330 92H632V200L635 350V521', 'site');
// escalators
s += '<g transform="translate(319 234) rotate(-23)"><rect width="37" height="88" fill="url(#tile)" stroke="#555"/><rect x="4" y="1" width="11" height="74" fill="#fff" stroke="#777"/><rect x="22" y="1" width="11" height="74" fill="#fff" stroke="#777"/><path d="M4 5h11M4 9h11M4 13h11M4 17h11M4 21h11M4 25h11M4 29h11M4 33h11M4 37h11M4 41h11M4 45h11M4 49h11M4 53h11M4 57h11M22 5h11M22 9h11M22 13h11M22 17h11M22 21h11M22 25h11M22 29h11M22 33h11M22 37h11M22 41h11M22 45h11M22 49h11M22 53h11M22 57h11" stroke="#999" stroke-width=".7"/><path d="M15 0h7v76h-7z" fill="#bbb"/><path d="M4 73h11v6H4zM22 73h11v6H22z" fill="#444"/><path d="M4 82h11v10H4zM22 82h11v10H22z" fill="#fff" stroke="#888" stroke-width=".7"/></g>';
C(367, 243, 4.5); R(322, 288, 10, 15, 'fill="#ddd" stroke="#666"'); R(325, 291, 4, 10, 'fill="#fff" stroke="#777" stroke-width=".6"');
P('M321 303H350M385 303H412V363M321 303V335H371V331H324V306H349M387 306H409V363M321 363V395H412V363zM324 366V391H409V366zM352 366V391M381 366V391', 'edge');
P('M324 391l28-25M324 366l28 25M352 391l29-25M352 366l29 25', 'faint');
R(386, 367, 17, 22, 'fill="none" stroke="#666"'); R(337, 335, 33, 8); P('M347 335v8M357 335v8', 'edge');
R(412, 316, 8, 19, 'fill="#ddd" stroke="#666"'); R(414, 319, 4, 13);
P('M288 400V288H322M288 400H321M412 398H460V390Q466 350 455 325V303H412', 'thin'); P('M474 304V286H555V181M474 304V322H558V394H547V414H464V497H557V440M561 183H630', 'thin');
// core rooms
R(288, 495, 54, 29, 'fill="#ddd" stroke="#666"'); R(291, 498, 48, 24, 'fill="#fff" stroke="#777" stroke-width=".7"'); R(293, 511, 34, 11, 'fill="url(#step)" stroke="#666" stroke-width=".7"'); R(308, 498, 16, 12, 'fill="url(#step)"'); P('M306 498l10 12M327 502q0 8 8 8', 'edge', 'stroke-width=".6"');
R(576, 286, 55, 49, 'fill="#fff" stroke="#777" stroke-width="1.6"'); R(579, 315, 21, 18, 'fill="none" stroke="#777" stroke-dasharray="3 1"'); P('M579 315l21 18M579 333l21-18', 'faint');
R(603, 301, 26, 38, 'fill="url(#stepv)" stroke="#555"'); P('M602 286V339M616 301V339', 'edge', 'stroke-width="1.6"'); P('M604 304l10-8M616 325l12-12M604 322l8 8M590 289h10v7h-10z', 'thin');
P('M601 340V356H616V406M601 356H619V406', 'edge'); R(619, 354, 11, 18, 'fill="url(#stepv)"'); P('M577 406H630M577 403H630', 'edge');
R(583, 372, 20, 3, 'fill="#ddd" stroke="#666" stroke-width=".7"');
R(577, 406, 32, 37, 'fill="#ddd" stroke="#555"'); R(580, 410, 26, 30, 'fill="#fff" stroke="#777"'); R(583, 414, 20, 22, 'fill="none" stroke="#777" stroke-width=".8"'); P('M583 414l20 22M603 414l-20 22', 'faint');
// columns
[[468,168],[468,242],[468,304],[256,260],[233,348],[233,407],[233,439],[331,441],[383,441],[465,440],[468,353],[561,181],[561,268]].forEach(([x, y], i) => R(x - 5, y - 3, i > 6 && i < 9 ? 10 : 11, [1,2,3,4,9,10,12].includes(i) ? 7 : 5, 'fill="#f4f4f4" stroke="#555" stroke-width=".8"'));
R(557, 348, 6, 11); R(557, 435, 6, 11); R(627, 178, 4, 12); R(627, 264, 4, 12);
for (const [x, y] of [[275,175],[365,171]]) R(x - 6, y - 2.5, 12, 5, `fill="#fff" stroke="#555" stroke-width=".8" transform="rotate(48 ${x} ${y})"`);
[[229,134],[219,174],[199,260],[185,310],[336,134],[167,392],[156,451],[190,470],[140,505],[225,509],[450,484],[560,484]].forEach(([x, y]) => C(x, y, 2.7, 'fill="#fff" stroke="#444" stroke-width=".9"'));
for (const x of [411,462,560,626]) C(x, 515, 3.5, 'fill="#fff" stroke="#444" stroke-width=".9"');
[[316,110],[384,110],[478,110],[572,110],[334,221],[375,255],[245,208],[213,298],[418,348]].forEach(([x, y]) => { C(x, y, 4, 'fill="#fff" stroke="#999" stroke-width=".7"'); T(x, y, 'W', 's3 mid'); T(x, y + 3, '01', 's3 mid'); });
[[250,80,'STN6'],[227,195,'TM01'],[134,304,'CT80'],[105,472,'MC1'],[625,281,'D2']].forEach(([x, y, t]) => { R(x - 5, y - 2, 10, 5, 'fill="#fff" stroke="#888" stroke-width=".6"'); T(x, y + 2, t, 's3 mid'); });
// level-change ticks
for (const [x, y] of [[305,288],[432,308],[595,182],[515,285],[515,318],[515,412],[515,497],[436,395],[302,395]]) P(`M${x} ${y - 4}v5h4v6`, 'edge', 'stroke-width=".8"');
for (const [x, y] of [[290,340],[552,215],[558,374],[462,455],[552,469]]) { P(`M${x - 3} ${y - 6}h5v4h6`, 'edge', 'stroke-width=".8"'); T(x + 3, y - 1, 'STEP', 's3'); }
// revision cloud
const pts = [[587,333],[577,359],[577,383],[562,409],[543,439],[543,486],[545,519],[553,536],[576,537],[599,537],[622,538],[647,526],[648,486],[645,449],[648,416],[647,379],[647,349],[637,329],[610,327],[587,333]];
let cl = 'M587 333';
for (let i = 1; i < pts.length; i++) { const [ax, ay] = pts[i - 1], [bx, by] = pts[i], n = Math.max(1, Math.round(Math.hypot(bx - ax, by - ay) / 11));
  for (let k = 1; k <= n; k++) cl += `A6 6 0 0 0 ${(ax + (bx - ax) * k / n).toFixed(1)} ${(ay + (by - ay) * k / n).toFixed(1)}`; }
P(cl, '', 'fill="none" stroke="#888" stroke-width=".9" stroke-dasharray="6 1"');
// labels
T(255, 156, 'RSL Terrace', 's6 mid'); T(448, 277, 'RSL', 's6 mid'); T(448, 282, 'RL 20.450', 's3 mid'); T(391, 327, 'RSL Foyer', 's4 mid'); T(505, 333, 'Line Of Egress Above', 's4 mid'); T(612, 90, 'Site Boundary', 's6 mid');
T(0, 0, 'Site Boundary', 's6 mid', 'transform="translate(117 506) rotate(-75)"');
T(0, 0, 'Line Of Awning Over Below', 's3 mid', 'transform="translate(188 150) rotate(-75)" fill="#666"'); T(0, 0, 'Line Of Footpath Below', 's3 mid', 'transform="translate(152 279) rotate(-75)" fill="#666"'); T(0, 0, 'Terrace', 's4 mid', 'transform="translate(181 333) rotate(-77)" fill="#666"');
for (const x of [337,366]) { T(x, 370, 'Lift To', 's4 mid'); T(x, 374, 'Residential', 's4 mid'); T(x, 378, 'Length', 's4 mid'); }
T(395, 373, 'LC03', 's4 mid'); T(395, 385, 'Lift To RSL', 's4 mid'); T(395, 389, 'Office Levels', 's4 mid'); T(593, 426, 'Goods Lift', 's4 mid'); T(593, 434, 'LC04', 's4 mid'); T(617, 295, 'SC04A', 's4 mid'); T(621, 350, 'SC04B', 's4 mid'); T(335, 510, 'SC05', 's3 mid'); T(342, 341, 'Gc', 's4 mid'); T(352, 341, 'Dw', 's4 mid'); T(285, 139, 'Planter Box', 's3 mid'); T(285, 142, 'Above', 's3 mid');
[[517,145,'RSL 20.600'],[517,302,'RSL 20.270'],[358,323,'RSL 20.270'],[243,330,'RSL 20.450'],[306,349,'RSL 20.270'],[347,468,'RSL 20.450'],[515,367,'RSL 20.400'],[514,457,'RSL 20.350'],[599,474,'RSL 20.350'],[576,351,'RSL 20.270'],[617,298,'RSL 20.450'],[620,345,'RSL 20.400']].forEach(([x, y, t]) => T(x, y, t, 's3 mid', 'fill="#555"'));
document.getElementById('plan').innerHTML = s;

document.getElementById('revs').innerHTML = ['Rev|Description|Date','A|DD - Stage 1 Issue Only|05.02.10','B|Revised Construction Issue #1|18.03.10','C|Client / Builder Co-ordinate Redesign|22.04.10','D|Issue for Site - Amend Wall & Ceiling Detail|16.05.10','E|Revised for Construction Issue #2|02.06.10','L|RSL Set Room Amendments|10.08.10']
  .map((r, i) => { const [a, b, c] = r.replace('&', '&amp;').split('|'), y = 617 + Math.round(i * 3.3); return `<text x="184" y="${y}">${a}</text><text x="${i ? 190 : 218}" y="${y}">${b}</text><text x="261" y="${y}">${c}</text>`; }).join('');
const notes = [[31,'All Drawings To Be Read In Conjunction With Structural,',1],[36,'Mechanical, Hydraulic and Electrical Engineers Detail',1],[41,'Drawings And Specifications.',1],[54,'All Levels Indicated Taken To Australian Height Datum (AHD)'],[66,'Refer To WD901 For Abbreviations Schedule'],[79,'All Dimensions To Be Verified On Site (VOS) Prior To Construction /'],[85,'Manufacture - Refer All Discrepancies To Nordon Jago Architects Pty'],[91,'Ltd - Drawings Are Not To Be Scaled From.'],[104,'Refer to Detail Drawings for typical details.'],[116,'Survey Evidence Carried Out By DEC Surveying Services Pty. Ltd -'],[122,'Refer To Drawing 202308'],[135,'Consolidated Boundary Definition By Dennis Watson Consulting'],[141,'Surveyors Drawing Ref 7815-08 (27th Jan 2009)'],[154,'All Proposed Works to Comply With The "Energy Efficiency'],[160,'Requirements" Of The Building Code Of Australia (BCA) Part J'],[172,'Generally All Materials & Construction to Comply To AS 3700:'],[178,'Footings & CFWs Installation to Comply to AS4773, AS 2904'],[184,'Wall Ties Installation to Comply to AS 3700 & Fire Requirements'],[190,'Gutters, Installation to Comply to AS 3500.3']];
document.getElementById('notes').insertAdjacentHTML('beforeend', notes.map(([y, t, b]) => `<text x="7" y="${y + 1}" style="font-size:5px" ${b ? 'font-weight="700"' : ''}>${t.replace('&', '&amp;')}</text>`).join(''));
</script>
</body>
</html>
